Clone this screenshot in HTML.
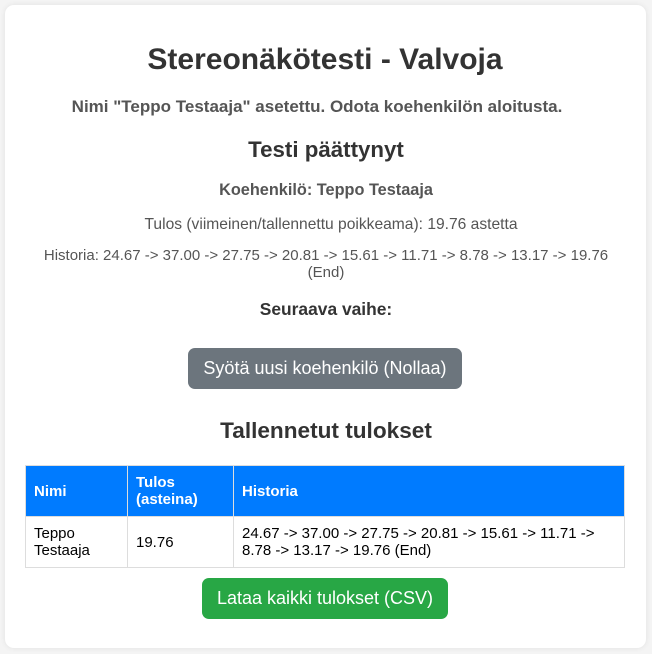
<!DOCTYPE html>
<html><head><meta charset="utf-8"><style>
*{margin:0;padding:0;box-sizing:border-box}
body{width:652px;height:654px;background:#f4f4f4;font-family:"Liberation Sans",Arial,sans-serif;position:relative;overflow:hidden}
.card{position:absolute;left:5px;top:5px;width:641px;height:643px;background:#fff;border-radius:9px;box-shadow:0 0 6px rgba(0,0,0,.08)}
.t{position:absolute;left:0;width:652px;text-align:center;white-space:nowrap}
.btn{position:absolute;color:#fff;border-radius:7px;font-size:18px;text-align:center}
table{position:absolute;left:25px;top:465px;width:600px;border-collapse:collapse;font-size:15px}
th{background:#007bff;color:#fff;text-align:left;font-weight:bold;padding:0 8px;height:51px;border:1px solid #ddd;line-height:17px}
td{padding:0 8px;height:51px;border:1px solid #ddd;color:#000;line-height:17px}
</style></head><body>
<div class="card"></div>
<div class="t" style="top:43px;font-size:30px;font-weight:bold;color:#333;left:-1px">Stereonäkötesti - Valvoja</div>
<div class="t" style="top:97px;font-size:17px;font-weight:bold;color:#555;left:-9px">Nimi "Teppo Testaaja" asetettu. Odota koehenkilön aloitusta.</div>
<div class="t" style="top:137px;font-size:22.3px;font-weight:bold;color:#333">Testi päättynyt</div>
<div class="t" style="top:181px;font-size:16.3px;font-weight:bold;color:#555">Koehenkilö: Teppo Testaaja</div>
<div class="t" style="top:216px;font-size:15.6px;color:#555;left:5px">Tulos (viimeinen/tallennettu poikkeama): 19.76 astetta</div>
<div class="t" style="top:247px;font-size:15px;color:#555;line-height:17px">Historia: 24.67 -&gt; 37.00 -&gt; 27.75 -&gt; 20.81 -&gt; 15.61 -&gt; 11.71 -&gt; 8.78 -&gt; 13.17 -&gt; 19.76<br>(End)</div>
<div class="t" style="top:299px;font-size:17.4px;font-weight:bold;color:#333">Seuraava vaihe:</div>
<div class="btn" style="left:188px;top:348px;width:274px;height:41px;line-height:41px;background:#6c757d">Syötä uusi koehenkilö (Nollaa)</div>
<div class="t" style="top:418px;font-size:22.6px;font-weight:bold;color:#333">Tallennetut tulokset</div>
<table>
<tr><th style="width:102px">Nimi</th><th style="width:106px">Tulos<br>(asteina)</th><th>Historia</th></tr>
<tr><td>Teppo<br>Testaaja</td><td>19.76</td><td>24.67 -&gt; 37.00 -&gt; 27.75 -&gt; 20.81 -&gt; 15.61 -&gt; 11.71 -&gt;<br>8.78 -&gt; 13.17 -&gt; 19.76 (End)</td></tr>
</table>
<div class="btn" style="left:202px;top:578px;width:246px;height:41px;line-height:41px;background:#28a745">Lataa kaikki tulokset (CSV)</div>
</body></html>
